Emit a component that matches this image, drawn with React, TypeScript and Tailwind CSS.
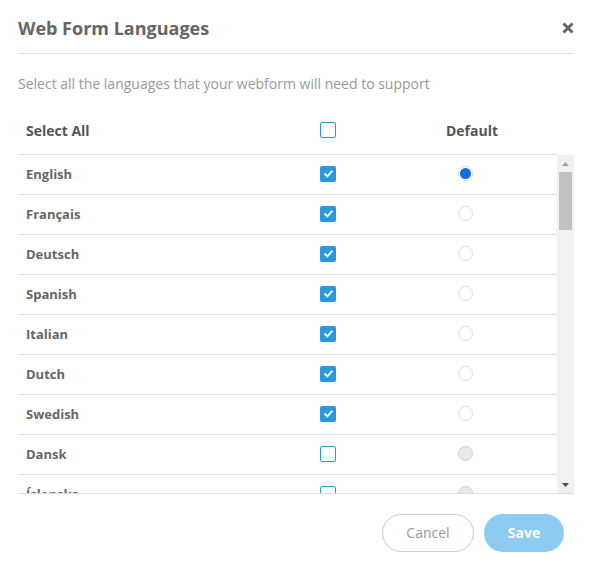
import React from "react";

type Lang = { name: string; enabled: boolean; isDefault?: boolean };

const LANGS: Lang[] = [
  { name: "English", enabled: true, isDefault: true },
  { name: "Français", enabled: true },
  { name: "Deutsch", enabled: true },
  { name: "Spanish", enabled: true },
  { name: "Italian", enabled: true },
  { name: "Dutch", enabled: true },
  { name: "Swedish", enabled: true },
  { name: "Dansk", enabled: false },
  { name: "Íslenska", enabled: false },
];

function Checkbox({ checked }: { checked: boolean }) {
  if (checked) {
    return (
      <span className="flex h-4 w-4 items-center justify-center rounded-[2px] bg-[#2a98de]">
        <svg width="9" height="8" viewBox="0 0 9 8" fill="none">
          <path d="M1.2 4.3 L3.4 6.3 L7.8 1.4" stroke="white" strokeWidth="1.9" strokeLinecap="square" />
        </svg>
      </span>
    );
  }
  return <span className="block h-4 w-4 rounded-[2px] border border-[#2a98de] bg-white" />;
}

function Radio({ selected, disabled }: { selected?: boolean; disabled?: boolean }) {
  if (disabled) {
    return <span className="block h-[15px] w-[15px] rounded-full border border-[#cfcfcf] bg-[#e9e9e9]" />;
  }
  return (
    <span className="flex h-[15px] w-[15px] items-center justify-center rounded-full border border-[#dcdcdc] bg-white">
      {selected && <span className="block h-[11px] w-[11px] rounded-full bg-[#0a6fd8]" />}
    </span>
  );
}

function ScrollTrack() {
  return (
    <div className="flex w-[17px] flex-col items-center bg-[#f1f1f1]">
      <div className="flex h-[17px] w-full items-center justify-center">
        <svg width="7" height="4" viewBox="0 0 7 4">
          <path d="M0 4 L3.5 0 L7 4 Z" fill="#a3a3a3" />
        </svg>
      </div>
      <div className="h-[58px] w-[13px] bg-[#c1c1c1]" />
      <div className="flex-1" />
      <div className="flex h-[17px] w-full items-center justify-center">
        <svg width="7" height="4" viewBox="0 0 7 4">
          <path d="M0 0 L7 0 L3.5 4 Z" fill="#505050" />
        </svg>
      </div>
    </div>
  );
}

export default function App() {
  return (
    <div
      className="h-[568px] w-[592px] bg-white px-[18px]"
      style={{ fontFamily: '"Open Sans", "Noto Sans", sans-serif' }}
    >
      {/* title bar */}
      <div className="flex h-[54px] items-center justify-between border-b border-[#dddddd] pt-[3px]">
        <h2 className="text-[18px] font-bold text-[#666666]">Web Form Languages</h2>
        <button className="flex h-4 w-4 items-center justify-end">
          <svg width="12" height="12" viewBox="0 0 12 12">
            <path d="M1.5 1.5 L10.5 10.5 M10.5 1.5 L1.5 10.5" stroke="#666666" strokeWidth="3" strokeLinecap="butt" />
          </svg>
        </button>
      </div>

      <p className="mt-[20px] text-[14px] leading-5 text-[#999999]">
        Select all the languages that your webform will need to support
      </p>

      {/* column headings */}
      <div className="mt-[12px] flex h-[49px] w-[539px] items-center border-b border-[#dddddd] text-[14px] font-bold text-[#555555]">
        <div className="w-[294px] pl-[8px]">Select All</div>
        <div className="flex w-[32px] justify-center">
          <Checkbox checked={false} />
        </div>
        <div className="w-[68px]" />
        <div className="w-[120px] text-center">Default</div>
      </div>

      {/* language list */}
      <div className="flex h-[339px] border-b border-[#dddddd]">
        <div className="flex-1 overflow-hidden">
          {LANGS.map((l) => (
            <div
              key={l.name}
              className="flex h-[40px] shrink-0 items-center border-b border-[#dddddd] text-[13px] font-bold text-[#666666]"
            >
              <div className="w-[294px] pl-[8px]">{l.name}</div>
              <div className="-mt-[2px] flex w-[32px] justify-center">
                <Checkbox checked={l.enabled} />
              </div>
              <div className="w-[61px]" />
              <div className="-mt-[2px] flex w-[120px] justify-center">
                <Radio selected={l.isDefault} disabled={!l.enabled} />
              </div>
            </div>
          ))}
        </div>
        <ScrollTrack />
      </div>

      {/* actions */}
      <div className="mt-[20px] flex justify-end gap-[10px] pr-[10px]">
        <button className="h-[38px] w-[92px] rounded-full border border-[#cccccc] bg-white pb-[2px] text-[14px] text-[#999999]">
          Cancel
        </button>
        <button className="h-[38px] w-[80px] rounded-full bg-[#8ecbf0] pb-[2px] text-[14px] font-bold text-white">
          Save
        </button>
      </div>
    </div>
  );
}
